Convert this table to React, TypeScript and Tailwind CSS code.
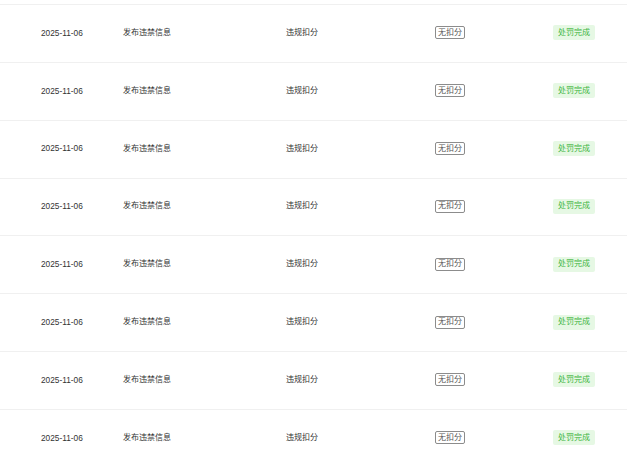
import React from 'react'

type Record = {
  date: string;
  reason: string;
  kind: string;
  score: string;
  status: string;
};

const records: Record[] = Array.from({ length: 8 }, () => ({
  date: '2025-11-06',
  reason: '发布违禁信息',
  kind: '违规扣分',
  score: '无扣分',
  status: '处罚完成',
}));

const Row: React.FC<{ item: Record }> = ({ item }) => {
  return (
    <div className='flex items-center h-[57.85px] pb-[1px] border-t border-[#f0f0f0] pl-[41px] text-[8px] text-[#333]'>
      <span className='w-[82px] shrink-0 text-[8.3px]'>{item.date}</span>
      <span className='w-[163px] shrink-0'>{item.reason}</span>
      <span className='w-[149px] shrink-0'>{item.kind}</span>
      <div className='w-[118px] shrink-0'>
        <span className='inline-flex items-center justify-center w-[30px] h-[13px] border border-[#8c8c8c] rounded-[2px] bg-white text-[#555]'>
          {item.score}
        </span>
      </div>
      <span className='inline-flex items-center justify-center w-[42px] h-[15px] bg-[#e6f8e4] text-[#3fb53f] rounded-[2px]'>
        {item.status}
      </span>
    </div>
  )
}

const App = () => {
  return (
    <main
      className='w-[627px] h-[473px] bg-white overflow-hidden pt-[4px]'
      style={{ fontFamily: '"Liberation Sans", "Noto Sans CJK SC", sans-serif' }}
    >
      {records.map((r, i) => (
        <Row key={i} item={r} />
      ))}
    </main>
  )
}

export default App
